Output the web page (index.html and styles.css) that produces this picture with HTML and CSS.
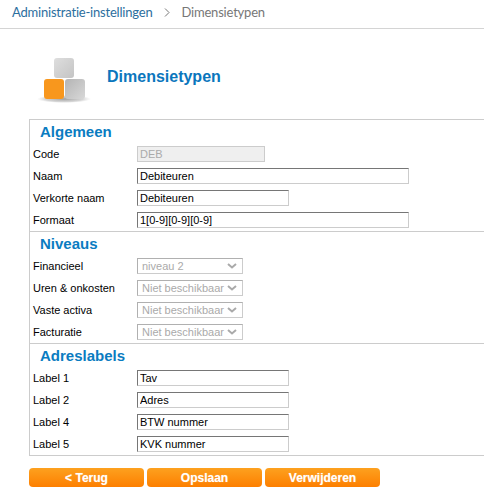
FILE: index.html
```html
<!DOCTYPE html>
<html lang="nl">
<head>
  <meta charset="UTF-8">
  <title>Dimensietypen</title>
  <link rel="stylesheet" href="styles.css">
</head>
<body>
  <!-- Breadcrumb -->
  <div class="crumbs">
    <a class="crumb-link">Administratie-instellingen</a>
    <svg class="crumb-sep" width="6" height="9" viewBox="0 0 6 9"><path d="M1 .5l4 4-4 4" fill="none" stroke="#777" stroke-width="1"/></svg>
    <span class="crumb-current">Dimensietypen</span>
  </div>

  <div class="page-head">
    <svg class="page-icon" width="60" height="60" viewBox="0 0 60 60">
      <defs>
        <linearGradient id="greyA" x1="0" y1="0" x2="1" y2="1">
          <stop offset="0" stop-color="#dedede"/>
          <stop offset="1" stop-color="#c4c4c4"/>
        </linearGradient>
        <linearGradient id="greyB" x1="0" y1="0" x2="1" y2="1">
          <stop offset="0" stop-color="#b4b4b4"/>
          <stop offset="1" stop-color="#d8d8d8"/>
        </linearGradient>
        <radialGradient id="floor">
          <stop offset="0" stop-color="#777" stop-opacity="0.7"/>
          <stop offset="0.7" stop-color="#999" stop-opacity="0.4"/>
          <stop offset="1" stop-color="#bbb" stop-opacity="0"/>
        </radialGradient>
      </defs>
      <ellipse cx="27" cy="43" rx="27" ry="4" fill="url(#floor)"/>
      <rect x="17" y="2" width="20" height="20" rx="3" fill="url(#greyA)"/>
      <rect x="7" y="23" width="20" height="20" rx="3" fill="#f8971d"/>
      <rect x="28" y="23" width="20" height="20" rx="3" fill="url(#greyB)"/>
    </svg>
    <h1 class="page-title">Dimensietypen</h1>
  </div>

  <form class="panel">
    <section class="block">
      <h2 class="block-title">Algemeen</h2>
      <div class="row"><label>Code</label><input class="field short" value="DEB" disabled></div>
      <div class="row"><label>Naam</label><input class="field long" value="Debiteuren"></div>
      <div class="row"><label>Verkorte naam</label><input class="field medium" value="Debiteuren"></div>
      <div class="row"><label>Formaat</label><input class="field long" value="1[0-9][0-9][0-9]"></div>
    </section>

    <section class="block">
      <h2 class="block-title">Niveaus</h2>
      <div class="row"><label>Financieel</label><select class="pick" disabled><option>niveau 2</option></select></div>
      <div class="row"><label>Uren &amp; onkosten</label><select class="pick" disabled><option>Niet beschikbaar</option></select></div>
      <div class="row"><label>Vaste activa</label><select class="pick" disabled><option>Niet beschikbaar</option></select></div>
      <div class="row"><label>Facturatie</label><select class="pick" disabled><option>Niet beschikbaar</option></select></div>
    </section>

    <section class="block">
      <h2 class="block-title">Adreslabels</h2>
      <div class="row"><label>Label 1</label><input class="field medium" value="Tav"></div>
      <div class="row"><label>Label 2</label><input class="field medium" value="Adres"></div>
      <div class="row"><label>Label 4</label><input class="field medium" value="BTW nummer"></div>
      <div class="row"><label>Label 5</label><input class="field medium" value="KVK nummer"></div>
    </section>
  </form>

  <div class="actions">
    <button class="btn" type="button">&lt; Terug</button>
    <button class="btn" type="button">Opslaan</button>
    <button class="btn" type="button">Verwijderen</button>
  </div>
</body>
</html>
```

FILE: styles.css
```css
* {
  box-sizing: border-box;
}

body {
  margin: 0;
  background: #fff;
  font-family: "Liberation Sans", Arial, sans-serif;
  font-size: 11px;
  color: #000;
  overflow: hidden;
}

/* Breadcrumb */
.crumbs {
  display: flex;
  align-items: center;
  height: 29px;
  padding: 0 0 4px 12px;
  border-bottom: 1px solid #d4d4d4;
  font-family: Lato, sans-serif;
  font-size: 13px;
  letter-spacing: -0.2px;
}

.crumb-link {
  color: #2c6e9e;
}

.crumb-sep {
  margin: 0 11px 0 12px;
}

.crumb-current {
  color: #777;
}

/* Page header */
.page-head {
  display: flex;
  align-items: center;
  height: 90px;
  padding: 0 0 0 37px;
}

.page-icon {
  margin-top: 23px;
  margin-right: 10px;
}

.page-title {
  margin: 6px 0 0;
  font-size: 16px;
  font-weight: bold;
  color: #0a76bd;
}

/* Form panel */
.panel {
  margin-left: 29px;
  border-left: 1px solid #ccc;
  border-top: 1px solid #ccc;
  border-bottom: 1px solid #ccc;
}

.block + .block {
  border-top: 1px solid #ccc;
}

.block-title {
  margin: 0;
  height: 23px;
  padding: 2px 0 0 10px;
  font-size: 15px;
  line-height: 20px;
  font-weight: bold;
  color: #0a7cc1;
}

.row {
  display: grid;
  grid-template-columns: 104px auto;
  justify-content: start;
  align-items: center;
  height: 22px;
  padding-left: 3px;
}

.row label {
  font-size: 11px;
}

.field {
  height: 16px;
  padding: 0 2px;
  border: 1px solid #ccc;
  border-top-color: #767676;
  border-left-color: #767676;
  border-radius: 0;
  font-family: inherit;
  font-size: 11px;
  color: #000;
  background: #fff;
}

.field:disabled {
  border-color: #ccc;
  background: #efefef;
  color: #aaa;
}

.short {
  width: 128px;
}

.medium {
  width: 152px;
}

.long {
  width: 272px;
}

.pick {
  width: 106px;
  height: 16px;
  padding: 0 0 0 4px;
  appearance: none;
  border: 1px solid #ccc;
  border-top-color: #b0b0b0;
  border-left-color: #b0b0b0;
  border-radius: 0;
  font-family: inherit;
  font-size: 11px;
  color: #aaa;
  opacity: 1;
  background: #fff url("data:image/svg+xml,%3Csvg xmlns='http://www.w3.org/2000/svg' width='10' height='6'%3E%3Cpath d='M1 1l4 3.5L9 1' fill='none' stroke='%23aaa' stroke-width='2'/%3E%3C/svg%3E") no-repeat right 5px center;
}

/* Buttons */
.actions {
  display: flex;
  gap: 3px;
  margin: 12px 0 0 29px;
}

.btn {
  width: 115px;
  height: 19px;
  padding: 0;
  border: none;
  border-radius: 4px;
  background: linear-gradient(to bottom, #fda11f, #fd7f00);
  color: #fff;
  font-family: inherit;
  font-size: 12px;
  font-weight: bold;
  text-shadow: 0 0 1px rgba(255, 255, 255, 0.5);
}
```
